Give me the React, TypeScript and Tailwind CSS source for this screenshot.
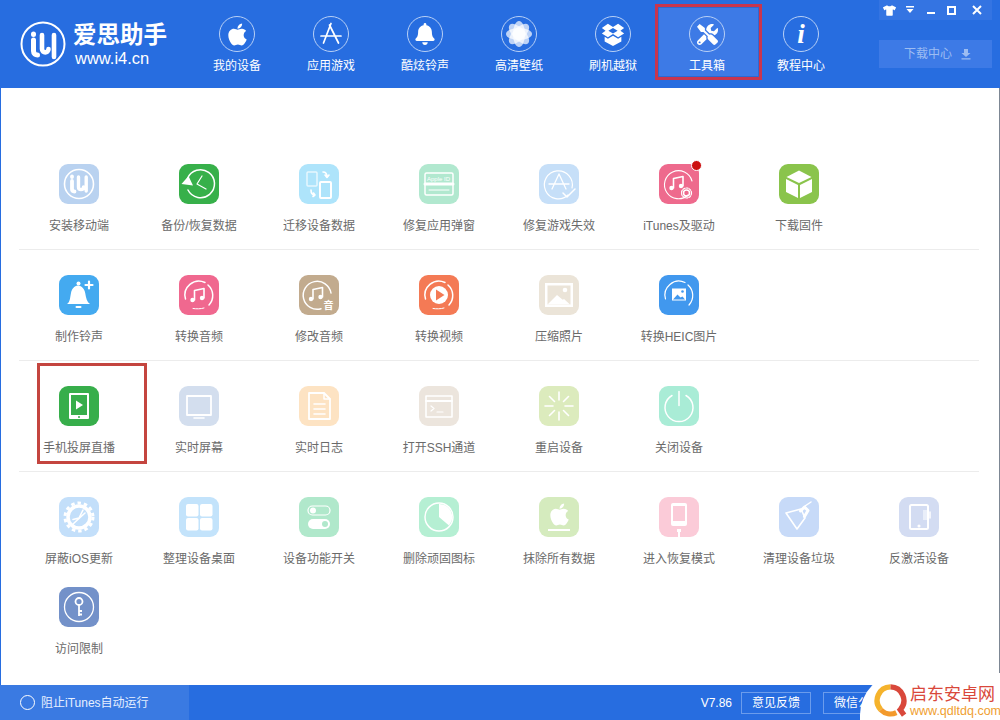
import React from "react";
import { FaApple, FaBell, FaTools, FaTshirt } from "react-icons/fa";

const S = ({ children }: { children: React.ReactNode }) => (
  <svg viewBox="0 0 40 40" width="40" height="40" fill="none" stroke="#fff" strokeWidth="1.5" strokeLinecap="round" strokeLinejoin="round">
    {children}
  </svg>
);

const Note = ({ x = 0, y = 0, s = 1 }: { x?: number; y?: number; s?: number }) => (
  <g transform={`translate(${x} ${y}) scale(${s})`}>
    <path d="M15.5 25V15.5L25 13.5V23" strokeWidth="1.6" />
    <circle cx="13.5" cy="25" r="2.2" fill="#fff" stroke="none" />
    <circle cx="23" cy="23" r="2.2" fill="#fff" stroke="none" />
  </g>
);

const I4 = ({ w = 1.6 }: { w?: number }) => (
  <g>
    <circle cx="20" cy="20" r="14.5" strokeWidth={w} />
    <path d="M13 17v8c0 1.500 1 2.500 2.500 2.500M13 12.500v.5" strokeWidth="3.800" />
    <path d="M19.500 13v10c0 3.500 5 3.500 5 0M27.200 13v14" strokeWidth="3.400" />
  </g>
);

const icons: Record<string, React.ReactNode> = {
  i4: <S><I4 /></S>,
  backup: (
    <S>
      <path d="M8.500 14.500A14 14 0 1 1 9 26" />
      <path d="M2.500 20L9.500 12l4.500 9.500z" fill="#fff" stroke="none" />
      <path d="M23 12l-5 8 9 5" strokeWidth="1.200" />
    </S>
  ),
  migrate: (
    <S>
      <rect x="8" y="8" width="10" height="14" rx="1" opacity=".7" />
      <rect x="21" y="18" width="11" height="16" rx="1" strokeWidth="2" />
      <path d="M24 8c3 0 4 2 4 5M26 11l2 2.500 2-2.500M12 26c0 3 1.500 5 4 5M14.500 29l1.500 2-2 1.500" strokeWidth="1.600" />
    </S>
  ),
  appleid: (
    <S>
      <rect x="6" y="9" width="28" height="22" rx="1.500" />
      <text x="8" y="16.500" fontSize="6" fill="#fff" stroke="none" fontFamily="Liberation Sans">Apple ID</text>
      <path d="M6 20h28" strokeWidth="3" />
      <path d="M10 26h20" strokeWidth="1" />
    </S>
  ),
  appfix: (
    <S>
      <path d="M29 31A14 14 0 1 1 33 24" strokeWidth="1.200" />
      <path d="M20 10L13 25M20 10l7 15M10 20h20" strokeWidth="1.300" />
      <path d="M24 29l4 4 8-8" strokeWidth="1.500" />
    </S>
  ),
  itunes: (
    <S>
      <path d="M29 31A14 14 0 1 1 33 17" strokeWidth="1.100" />
      <Note x={-1} y={-1} />
      <circle cx="27.500" cy="29" r="3" strokeWidth="1.500" />
      <circle cx="27.500" cy="29" r="5" strokeWidth="1.200" strokeDasharray="2 1.200" />
    </S>
  ),
  box: (
    <svg viewBox="0 0 40 40" width="40" height="40" fill="#fff">
      <path d="M20 6.500L32.500 13 20 19 7.500 13z" />
      <path d="M7 15l12 6v13L7 28z" />
      <path d="M33 15l-12 6v13l12-6z" />
    </svg>
  ),
  bellplus: (
    <S>
      <path d="M8 29c3-2 3-6 4-11 .8-4 3-7 7-7.500 4 .5 6.500 3.500 7.200 7.500.8 5 1.800 9 4.800 11z" fill="#fff" stroke="none" />
      <circle cx="19.500" cy="8.500" r="2" fill="#fff" stroke="none" />
      <path d="M17.500 32h4" strokeWidth="2" />
      <path d="M30 6.500v7M26.500 10h7" strokeWidth="2.200" />
    </S>
  ),
  music: (
    <S>
      <path d="M30 30A14 14 0 0 0 29 10" />
      <path d="M6.500 24A14 14 0 0 1 26 7.500" />
      <path d="M14 33.500c3 .5 8 .5 11-.5" strokeWidth="1" />
      <Note y={0} />
    </S>
  ),
  musicedit: (
    <S>
      <path d="M32 18A14 14 0 1 0 22 33.800" />
      <Note x={-1.500} y={-1} />
      <text x="24.500" y="34" fontSize="10" fontWeight="700" fill="#fff" stroke="none" fontFamily="Noto Sans CJK SC">音</text>
    </S>
  ),
  video: (
    <S>
      <path d="M30 30A14 14 0 0 0 29 10" />
      <path d="M6.500 24A14 14 0 0 1 26 7.500" />
      <path d="M14 33.500c3 .5 8 .5 11-.5" strokeWidth="1" />
      <circle cx="20" cy="20" r="9" fill="#fff" stroke="none" />
      <path d="M17 14.500L25.500 20 17 25.500z" fill="#f47a55" stroke="none" />
    </S>
  ),
  photo: (
    <svg viewBox="0 0 40 40" width="40" height="40">
      <rect x="6" y="8" width="28" height="24" fill="#fff" />
      <rect x="8.500" y="10.500" width="23" height="19" fill="#ebe4d8" />
      <path d="M8.500 29.500L18 20l6 5 2 4.500zM22 26l3-2 6 5.500H24z" fill="#fff" />
      <circle cx="26" cy="15" r="2.300" fill="#fff" />
    </svg>
  ),
  heic: (
    <S>
      <path d="M30 30A14 14 0 0 0 29 10" strokeWidth="1.200" />
      <path d="M6.500 24A14 14 0 0 1 26 7.500" strokeWidth="1.200" />
      <rect x="13" y="13.500" width="14" height="12" fill="#fff" stroke="none" />
      <path d="M14 24.500l4.500-5 3 3 2-1 2.500 3z" fill="#4198ee" stroke="none" />
      <circle cx="23.500" cy="16.500" r="1.300" fill="#4198ee" stroke="none" />
    </S>
  ),
  cast: (
    <S>
      <rect x="10" y="7" width="20" height="26" rx="1" fill="#fff" stroke="none" />
      <rect x="12" y="9" width="16" height="20" fill="#37ae4b" stroke="none" />
      <path d="M17 14.500l7 4.500-7 4.500z" fill="#fff" stroke="none" />
      <circle cx="20" cy="31" r="1" fill="#37ae4b" stroke="none" />
    </S>
  ),
  monitor: (
    <S>
      <rect x="8" y="10" width="24" height="19" strokeWidth="1.800" strokeLinecap="square" />
      <path d="M15 32h10" strokeWidth="1.600" />
    </S>
  ),
  log: (
    <S>
      <path d="M10 7h15l6 6v20H10z" strokeWidth="1.800" />
      <path d="M25 7v6h6" strokeWidth="1.500" />
      <path d="M15 18h11M15 23h11M15 28h11" strokeWidth="1.600" />
    </S>
  ),
  ssh: (
    <S>
      <rect x="7" y="10" width="26" height="21" strokeWidth="1.600" />
      <path d="M7 15h26" strokeWidth="2" />
      <path d="M12 20l3 2.500-3 2.500M18 26h6" strokeWidth="1.200" />
    </S>
  ),
  restart: (
    <S>
      <path d="M20 6v8M20 26v8M6 20h8M26 20h8M10.500 10.500l5 5M24.500 24.500l5 5M29.500 10.500l-5 5M15.500 24.500l-5 5" strokeWidth="1.600" />
    </S>
  ),
  power: (
    <S>
      <path d="M20 5.500v14" strokeWidth="1.500" />
      <path d="M13 9.500a14 14 0 1 0 14 0" strokeWidth="1.500" />
    </S>
  ),
  gear: (
    <S>
      <circle cx="20" cy="20" r="11" strokeWidth="3.500" />
      <circle cx="20" cy="20" r="14" strokeWidth="3" strokeDasharray="3.500 2.900" strokeLinecap="butt" />
      <path d="M24 13l-4 8-6 1.500M26 16L14 27" strokeWidth="1.600" />
    </S>
  ),
  grid: (
    <svg viewBox="0 0 40 40" width="40" height="40" fill="#fff">
      <rect x="7" y="7" width="12.500" height="12.500" rx="2" />
      <rect x="21" y="7" width="12.500" height="12.500" rx="2" />
      <rect x="7" y="21" width="12.500" height="12.500" rx="2" />
      <rect x="21" y="21" width="12.500" height="12.500" rx="2" />
    </svg>
  ),
  toggle: (
    <S>
      <rect x="9" y="9" width="22" height="9" rx="4.500" strokeWidth="1.200" />
      <circle cx="14" cy="13.500" r="3" fill="#fff" stroke="none" />
      <rect x="9" y="22" width="22" height="10" rx="5" fill="#fff" stroke="none" />
      <circle cx="26" cy="27" r="3" fill="#b0e8cb" stroke="none" />
    </S>
  ),
  pie: (
    <S>
      <circle cx="20" cy="20" r="14" strokeWidth="1.500" />
      <path d="M20 7a13 13 0 0 1 10 21.500L20 20z" fill="#fff" stroke="none" />
    </S>
  ),
  erase: (
    <div className="relative flex h-10 w-10 flex-col items-center pt-[5px] text-white">
      <FaApple size={25} />
      <span className="mt-[2px] h-[2px] w-[22px] bg-white" />
    </div>
  ),
  recovery: (
    <S>
      <rect x="12" y="6" width="16" height="23" rx="2" fill="#fff" stroke="none" />
      <rect x="14" y="9" width="12" height="15" fill="#fbcbd8" stroke="none" />
      <path d="M18 32h4v3h-4z" fill="#fff" stroke="none" />
      <path d="M20 35v5" strokeWidth="2" />
    </S>
  ),
  broom: (
    <S>
      <path d="M7 16l15-4 4 9-8 11z" strokeWidth="1.600" />
      <path d="M21.500 14l4-4 3.500 3.500-3.500 6" strokeWidth="3" />
      <path d="M26 9l6-4" strokeWidth="1.500" />
    </S>
  ),
  deact: (
    <S>
      <rect x="11" y="8" width="18" height="24" rx="1.500" strokeWidth="2" />
      <rect x="24" y="13" width="5" height="10" fill="#fff" opacity=".5" stroke="none" />
      <path d="M31 15v6" strokeWidth="1.500" />
      <circle cx="20" cy="29" r=".8" fill="#fff" />
    </S>
  ),
  key: (
    <S>
      <circle cx="20" cy="20" r="14.500" strokeWidth="1.300" />
      <circle cx="20" cy="14.500" r="3.500" strokeWidth="1.800" />
      <path d="M20 18v11M20 24h3M20 27.500h3" strokeWidth="1.800" strokeLinecap="butt" />
    </S>
  ),
};

type Tool = { label: string; icon: string; bg: string; dot?: boolean; marked?: boolean };

const rows: Tool[][] = [
  [
    { label: "安装移动端", icon: "i4", bg: "bg-[#b9d2f0]" },
    { label: "备份/恢复数据", icon: "backup", bg: "bg-[#37b04a]" },
    { label: "迁移设备数据", icon: "migrate", bg: "bg-[#aee4fb]" },
    { label: "修复应用弹窗", icon: "appleid", bg: "bg-[#b1e8cf]" },
    { label: "修复游戏失效", icon: "appfix", bg: "bg-[#c6dff8]" },
    { label: "iTunes及驱动", icon: "itunes", bg: "bg-[#ee6a8d]", dot: true },
    { label: "下载固件", icon: "box", bg: "bg-[#8ac44c]" },
  ],
  [
    { label: "制作铃声", icon: "bellplus", bg: "bg-[#44aaf0]" },
    { label: "转换音频", icon: "music", bg: "bg-[#f0688f]" },
    { label: "修改音频", icon: "musicedit", bg: "bg-[#c2ab8e]" },
    { label: "转换视频", icon: "video", bg: "bg-[#f47a55]" },
    { label: "压缩照片", icon: "photo", bg: "bg-[#ebe4d8]" },
    { label: "转换HEIC图片", icon: "heic", bg: "bg-[#4198ee]" },
  ],
  [
    { label: "手机投屏直播", icon: "cast", bg: "bg-[#37ae4b]", marked: true },
    { label: "实时屏幕", icon: "monitor", bg: "bg-[#d3deee]" },
    { label: "实时日志", icon: "log", bg: "bg-[#fde3c3]" },
    { label: "打开SSH通道", icon: "ssh", bg: "bg-[#ece5dd]" },
    { label: "重启设备", icon: "restart", bg: "bg-[#dcebbd]" },
    { label: "关闭设备", icon: "power", bg: "bg-[#a9ecd6]" },
  ],
  [
    { label: "屏蔽iOS更新", icon: "gear", bg: "bg-[#c3dffa]" },
    { label: "整理设备桌面", icon: "grid", bg: "bg-[#c3e3fb]" },
    { label: "设备功能开关", icon: "toggle", bg: "bg-[#b0e8cb]" },
    { label: "删除顽固图标", icon: "pie", bg: "bg-[#b5efd3]" },
    { label: "抹除所有数据", icon: "erase", bg: "bg-[#d5ebbe]" },
    { label: "进入恢复模式", icon: "recovery", bg: "bg-[#fbcbd8]" },
    { label: "清理设备垃圾", icon: "broom", bg: "bg-[#c7daf8]" },
    { label: "反激活设备", icon: "deact", bg: "bg-[#d3dcf2]" },
    { label: "访问限制", icon: "key", bg: "bg-[#7391c9]" },
  ],
];

const Cell = ({ t }: { t: Tool }) => (
  <div className="relative flex h-[69px] w-[120px] flex-col items-center">
    {t.marked && (
      <div className="absolute left-[18px] top-[-23px] h-[101px] w-[110px] border-[3px] border-[#c4453f]" />
    )}
    <div className={`relative h-10 w-10 shrink-0 overflow-hidden rounded-[9px] ${t.bg}`}>{icons[t.icon]}</div>
    {t.dot && (
      <div className="absolute left-[72px] top-[-4px] h-[11px] w-[11px] rounded-full border border-white bg-[#cc0f0f]" />
    )}
    <div className="mt-[14px] h-4 shrink-0 whitespace-nowrap text-[12px] leading-4 text-[#6a6a6a]">{t.label}</div>
  </div>
);

const Ring = ({ children }: { children: React.ReactNode }) => (
  <div className="flex h-[36px] w-[36px] items-center justify-center rounded-full border border-[#b8d0f6] text-white">
    {children}
  </div>
);

const Flower = () => (
  <svg viewBox="0 0 28 28" width="28" height="28">
    {[0, 45, 90, 135].map((a) => (
      <ellipse key={a} cx="14" cy="14" rx="6" ry="13" fill="#fff" opacity=".7" transform={`rotate(${a} 14 14)`} />
    ))}
  </svg>
);

const AppStore = () => (
  <svg viewBox="0 0 28 28" width="28" height="28" fill="none" stroke="#fff" strokeWidth="1.700" strokeLinecap="round">
    <path d="M14 3.500L6.500 23M12.500 5l9 18M4 16h20" />
  </svg>
);

const OpenBox = () => (
  <svg viewBox="0 0 28 28" width="26" height="26" fill="#fff">
    <path d="M2 7.500L8.500 3 14 6.500 19.500 3 26 7.500 22 10.500l4 3-6.500 4L14 14l-5.500 3.500L2 13.500l4-3zM9 10.500l5 3 5-3-5-3z" fillRule="evenodd" />
    <path d="M5 17l3.500 2.200L14 16l5.500 3.200L23 17v5l-9 5-9-5z" />
  </svg>
);

const nav: { label: string; icon: React.ReactNode; active?: boolean }[] = [
  { label: "我的设备", icon: <FaApple size={25} /> },
  { label: "应用游戏", icon: <AppStore /> },
  { label: "酷炫铃声", icon: <FaBell size={22} /> },
  { label: "高清壁纸", icon: <Flower /> },
  { label: "刷机越狱", icon: <OpenBox /> },
  { label: "工具箱", icon: <FaTools size={21} />, active: true },
  {
    label: "教程中心",
    icon: <span className="font-['Liberation_Serif',serif] text-[27px] font-bold italic leading-none">i</span>,
  },
];

export default function App() {
  return (
    <div className="relative flex h-[720px] w-[1000px] flex-col overflow-hidden bg-white font-['Liberation_Sans','Noto_Sans_CJK_SC',sans-serif]">
      <header className="flex h-[88px] shrink-0 bg-[#276de0] text-white">
        <div className="flex h-full w-[190px] shrink-0 items-start pl-[20px] pt-[21px]">
          <svg viewBox="0 0 46 46" width="46" height="46" fill="none" stroke="#fff" strokeLinecap="round">
            <circle cx="23" cy="23" r="21.500" strokeWidth="2" />
            <path d="M13.500 19v11c0 3 2 4 4 4M13.500 13v.500" strokeWidth="5" />
            <path d="M22 14v14c0 4.500 6.500 4.500 6.500 0M34 14v22" strokeWidth="4.600" />
          </svg>
          <div className="ml-[7px] flex flex-col">
            <div className="text-[23.500px] font-bold leading-[28px]">爱思助手</div>
            <div className="ml-[2px] mt-[-1px] text-[16.500px] leading-[20px]">www.i4.cn</div>
          </div>
        </div>
        <nav className="flex h-full">
          {nav.map((n) => (
            <div key={n.label} className="relative flex h-full w-[94px] flex-col items-center pt-[16px]">
              {n.active && (
                <div className="absolute left-[-5px] top-[4px] h-[76px] w-[107px] border-[3px] border-[#c8354e] bg-[#3d7ae6] outline outline-1 -outline-offset-4 outline-[#2f68d0]" />
              )}
              <div className="relative">
                <Ring>{n.icon}</Ring>
              </div>
              <div className="relative mt-[6px] text-[12px] leading-4">{n.label}</div>
            </div>
          ))}
        </nav>
        <div className="ml-[31px] flex w-[113px] flex-col">
          <div className="flex h-[20px] items-center bg-[#3474e2]">
            <div className="flex w-[20px] justify-center"><FaTshirt size={13} /></div>
            <div className="flex w-[21px] justify-center">
              <svg viewBox="0 0 10 10" width="10" height="10" fill="#fff"><path d="M1 1h8v1.500H1zM1.500 4h7L5 8z" /></svg>
            </div>
            <div className="flex w-[21px] justify-center">
              <span className="mt-[6px] h-[2px] w-[8px] bg-white" />
            </div>
            <div className="flex w-[21px] justify-center">
              <span className="h-[9px] w-[9px] border-2 border-white" />
            </div>
            <div className="flex w-[30px] justify-center">
              <svg viewBox="0 0 10 10" width="10" height="10" stroke="#fff" strokeWidth="2"><path d="M1 1l8 8M9 1l-8 8" /></svg>
            </div>
          </div>
          <div className="mt-[20px] flex h-[28px] items-center bg-[#3d7ae6] pl-[25px] text-[12px] text-[#9dbdf2]">
            下载中心
            <svg className="ml-[8px]" viewBox="0 0 12 12" width="12" height="12" fill="#9dbdf2"><path d="M4 1h4v4h2.500L6 9 1.500 5H4zM1.500 10.200h9v1.300h-9z" /></svg>
          </div>
        </div>
      </header>

      <main className="flex-1 border-x border-l-[#276de0] border-r-[#7d8794] px-[18px] pt-[51px]">
        {rows.map((r, i) => (
          <div
            key={i}
            className={`grid w-[960px] grid-cols-[repeat(8,120px)] gap-y-[21px] pt-[25px] pb-[16px] ${
              i < rows.length - 1 ? "border-b border-[#ececec]" : ""
            }`}
          >
            {r.map((t) => (
              <Cell key={t.label} t={t} />
            ))}
          </div>
        ))}
      </main>

      <footer className="flex h-[35px] shrink-0 items-center bg-[#276de0] text-white">
        <div className="flex h-full w-[189px] items-center bg-[#3a7ae2] pl-[20px] text-[12px] text-[#e6efff]">
          <span className="mr-[6px] h-[15px] w-[15px] rounded-full border border-white" />
          阻止iTunes自动运行
        </div>
        <div className="flex flex-1 items-center justify-end pr-[95px] text-[12px]">
          <span className="mr-[9px]">V7.86</span>
          <span className="flex h-[22px] w-[70px] items-center justify-center border border-[#6b9cec]">意见反馈</span>
          <span className="ml-[12px] flex h-[22px] w-[82px] items-center justify-center border border-[#6b9cec]">微信公众号</span>
        </div>
      </footer>

      <div className="absolute bottom-0 right-0 flex h-[47px] w-[140px] items-center rounded-tl-[42px] bg-white pl-[13px]">
        <svg className="mt-[7px] shrink-0" viewBox="0 0 36 36" width="35" height="35" fill="none" strokeWidth="5.500">
          <path d="M18 4A14 14 0 0 0 8 27.500" stroke="#f5b32c" />
          <path d="M8 27.500A14 14 0 0 0 24 30.500" stroke="#f39a2c" />
          <path d="M18 4A14 14 0 0 1 28 27.500L32 33" stroke="#d9483b" />
        </svg>
        <div className="ml-[2px] mt-[9px] flex flex-col">
          <div className="whitespace-nowrap text-[17px] leading-[20px] text-[#d9483b]">启东安卓网</div>
          <div className="whitespace-nowrap text-[12.500px] leading-[13px] text-[#f0a030]">www.qdltdq.com</div>
        </div>
      </div>
    </div>
  );
}
